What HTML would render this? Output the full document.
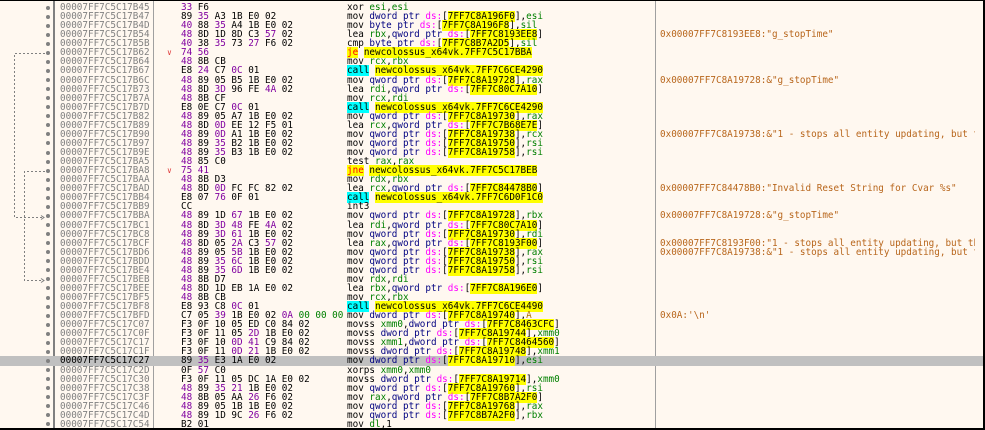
<!DOCTYPE html>
<html><head><meta charset="utf-8">
<style>
html,body{margin:0;padding:0;}
body{width:985px;height:429px;overflow:hidden;background:#fff;position:relative;font-family:"DejaVu Sans Mono","Liberation Mono",monospace;font-size:9.3px;}
#pane{position:absolute;left:0;top:0;width:983px;height:427px;background:#fff8f0;border-top:1px solid #000;border-right:2px solid #000;border-bottom:2px solid #000;overflow:hidden;}
#rows{position:absolute;left:0;top:2px;width:983px;}
.r{position:relative;height:9.07px;line-height:9.07px;white-space:pre;}
.h{background:#c0c0c0;}
.r i{position:absolute;left:46px;top:2.5px;width:4px;height:4px;border-radius:50%;background:#808080;}
.r b{position:absolute;left:60px;top:0;color:#808080;font-weight:normal;}
.h b{color:#000;}
.r s{position:absolute;left:181px;top:0;width:164px;clip-path:inset(-4px 0 -4px 0);color:#000;text-decoration:none;}
.r u{position:absolute;left:347px;top:0;width:306px;clip-path:inset(-4px 0 -4px 0);color:#000;text-decoration:none;}
.r em{position:absolute;left:660px;top:0;width:315px;clip-path:inset(-4px 0 -4px 0);color:#b8661c;font-style:normal;}
.r q{position:absolute;left:167px;top:0;color:#e04040;font-size:8px;}
.r q:before,.r q:after{content:none;}
.p{color:#8000a0}.g{color:#008000}.z{color:#000080}.d{color:#ff00ff}
.y{background:#ffff00}.j{background:#ffff00;color:#ff0000}.c{background:#00ffff}.a{color:#b07000}
.vl{position:absolute;top:0;height:427px;}
</style></head><body>
<div id="pane">
<div class="vl" style="left:53px;width:2px;background:#808080"></div>
<div class="vl" style="left:153px;width:1px;background:#a0a0a0"></div>
<div class="vl" style="left:655px;width:1px;background:#a0a0a0"></div>
<svg width="60" height="427" style="position:absolute;left:0;top:0">
<g stroke="#808080" stroke-width="1" stroke-dasharray="2,2" fill="none">
<path d="M45 52.5H14.5V216.5H44"/>
<path d="M45 170.5H24.5V279.5H44"/>
</g>
<g stroke="#808080" fill="none"><path d="M41 214.5l3 2-3 2"/><path d="M41 277.5l3 2-3 2"/></g>
</svg>
<div id="rows">
<div class="r"><i></i><b>00007FF7C5C17B45</b><s><span class="p">33</span> F6</s><u>xor <span class="g">esi</span>,<span class="g">esi</span></u></div>
<div class="r"><i></i><b>00007FF7C5C17B47</b><s>89 <span class="p">35</span> A3 1B E0 02</s><u>mov <span class="z">dword ptr</span> <span class="d">ds:</span>[<span class="y">7FF7C8A196F0</span>],<span class="g">esi</span></u></div>
<div class="r"><i></i><b>00007FF7C5C17B4D</b><s><span class="p">40</span> 88 <span class="p">35</span> A4 1B E0 02</s><u>mov <span class="z">byte ptr</span> <span class="d">ds:</span>[<span class="y">7FF7C8A196F8</span>],<span class="g">sil</span></u></div>
<div class="r"><i></i><b>00007FF7C5C17B54</b><s><span class="p">48</span> 8D 1D 8D C3 <span class="p">57</span> 02</s><u>lea <span class="g">rbx</span>,<span class="z">qword ptr</span> <span class="d">ds:</span>[<span class="y">7FF7C8193EE8</span>]</u><em>0x00007FF7C8193EE8:"g_stopTime"</em></div>
<div class="r"><i></i><b>00007FF7C5C17B5B</b><s><span class="p">40</span> 38 <span class="p">35</span> 73 <span class="p">27</span> F6 02</s><u>cmp <span class="z">byte ptr</span> <span class="d">ds:</span>[<span class="y">7FF7C8B7A2D5</span>],<span class="g">sil</span></u></div>
<div class="r"><i></i><b>00007FF7C5C17B62</b><q>&#x2228;</q><s><span class="p">74 56</span></s><u><span class="j">je</span> <span class="y">newcolossus_x64vk.7FF7C5C17BBA</span></u></div>
<div class="r"><i></i><b>00007FF7C5C17B64</b><s><span class="p">48</span> 8B CB</s><u>mov <span class="g">rcx</span>,<span class="g">rbx</span></u></div>
<div class="r"><i></i><b>00007FF7C5C17B67</b><s>E8 <span class="p">24</span> C7 <span class="p">0C</span> 01</s><u><span class="c">call</span> <span class="y">newcolossus_x64vk.7FF7C6CE4290</span></u></div>
<div class="r"><i></i><b>00007FF7C5C17B6C</b><s><span class="p">48</span> 89 05 B5 1B E0 02</s><u>mov <span class="z">qword ptr</span> <span class="d">ds:</span>[<span class="y">7FF7C8A19728</span>],<span class="g">rax</span></u><em>0x00007FF7C8A19728:&amp;"g_stopTime"</em></div>
<div class="r"><i></i><b>00007FF7C5C17B73</b><s><span class="p">48</span> 8D <span class="p">3D</span> 96 FE <span class="p">4A</span> 02</s><u>lea <span class="g">rdi</span>,<span class="z">qword ptr</span> <span class="d">ds:</span>[<span class="y">7FF7C80C7A10</span>]</u></div>
<div class="r"><i></i><b>00007FF7C5C17B7A</b><s><span class="p">48</span> 8B CF</s><u>mov <span class="g">rcx</span>,<span class="g">rdi</span></u></div>
<div class="r"><i></i><b>00007FF7C5C17B7D</b><s>E8 0E C7 <span class="p">0C</span> 01</s><u><span class="c">call</span> <span class="y">newcolossus_x64vk.7FF7C6CE4290</span></u></div>
<div class="r"><i></i><b>00007FF7C5C17B82</b><s><span class="p">48</span> 89 05 A7 1B E0 02</s><u>mov <span class="z">qword ptr</span> <span class="d">ds:</span>[<span class="y">7FF7C8A19730</span>],<span class="g">rax</span></u></div>
<div class="r"><i></i><b>00007FF7C5C17B89</b><s><span class="p">48</span> 8D <span class="p">0D</span> EE 12 F5 01</s><u>lea <span class="g">rcx</span>,<span class="z">qword ptr</span> <span class="d">ds:</span>[<span class="y">7FF7C7B68E7E</span>]</u></div>
<div class="r"><i></i><b>00007FF7C5C17B90</b><s><span class="p">48</span> 89 <span class="p">0D</span> A1 1B E0 02</s><u>mov <span class="z">qword ptr</span> <span class="d">ds:</span>[<span class="y">7FF7C8A19738</span>],<span class="g">rcx</span></u><em>0x00007FF7C8A19738:&amp;"1 - stops all entity updating, but th</em></div>
<div class="r"><i></i><b>00007FF7C5C17B97</b><s><span class="p">48</span> 89 <span class="p">35</span> B2 1B E0 02</s><u>mov <span class="z">qword ptr</span> <span class="d">ds:</span>[<span class="y">7FF7C8A19750</span>],<span class="g">rsi</span></u></div>
<div class="r"><i></i><b>00007FF7C5C17B9E</b><s><span class="p">48</span> 89 <span class="p">35</span> B3 1B E0 02</s><u>mov <span class="z">qword ptr</span> <span class="d">ds:</span>[<span class="y">7FF7C8A19758</span>],<span class="g">rsi</span></u></div>
<div class="r"><i></i><b>00007FF7C5C17BA5</b><s><span class="p">48</span> 85 C0</s><u>test <span class="g">rax</span>,<span class="g">rax</span></u></div>
<div class="r"><i></i><b>00007FF7C5C17BA8</b><q>&#x2228;</q><s><span class="p">75 41</span></s><u><span class="j">jne</span> <span class="y">newcolossus_x64vk.7FF7C5C17BEB</span></u></div>
<div class="r"><i></i><b>00007FF7C5C17BAA</b><s><span class="p">48</span> 8B D3</s><u>mov <span class="g">rdx</span>,<span class="g">rbx</span></u></div>
<div class="r"><i></i><b>00007FF7C5C17BAD</b><s><span class="p">48</span> 8D <span class="p">0D</span> FC FC 82 02</s><u>lea <span class="g">rcx</span>,<span class="z">qword ptr</span> <span class="d">ds:</span>[<span class="y">7FF7C84478B0</span>]</u><em>0x00007FF7C84478B0:"Invalid Reset String for Cvar %s"</em></div>
<div class="r"><i></i><b>00007FF7C5C17BB4</b><s>E8 07 <span class="p">76</span> 0F 01</s><u><span class="c">call</span> <span class="y">newcolossus_x64vk.7FF7C6D0F1C0</span></u></div>
<div class="r"><i></i><b>00007FF7C5C17BB9</b><s>CC</s><u>int3</u></div>
<div class="r"><i></i><b>00007FF7C5C17BBA</b><s><span class="p">48</span> 89 1D <span class="p">67</span> 1B E0 02</s><u>mov <span class="z">qword ptr</span> <span class="d">ds:</span>[<span class="y">7FF7C8A19728</span>],<span class="g">rbx</span></u><em>0x00007FF7C8A19728:&amp;"g_stopTime"</em></div>
<div class="r"><i></i><b>00007FF7C5C17BC1</b><s><span class="p">48</span> 8D <span class="p">3D 48</span> FE <span class="p">4A</span> 02</s><u>lea <span class="g">rdi</span>,<span class="z">qword ptr</span> <span class="d">ds:</span>[<span class="y">7FF7C80C7A10</span>]</u></div>
<div class="r"><i></i><b>00007FF7C5C17BC8</b><s><span class="p">48</span> 89 <span class="p">3D 61</span> 1B E0 02</s><u>mov <span class="z">qword ptr</span> <span class="d">ds:</span>[<span class="y">7FF7C8A19730</span>],<span class="g">rdi</span></u></div>
<div class="r"><i></i><b>00007FF7C5C17BCF</b><s><span class="p">48</span> 8D 05 <span class="p">2A</span> C3 <span class="p">57</span> 02</s><u>lea <span class="g">rax</span>,<span class="z">qword ptr</span> <span class="d">ds:</span>[<span class="y">7FF7C8193F00</span>]</u><em>0x00007FF7C8193F00:"1 - stops all entity updating, but th</em></div>
<div class="r"><i></i><b>00007FF7C5C17BD6</b><s><span class="p">48</span> 89 05 <span class="p">5B</span> 1B E0 02</s><u>mov <span class="z">qword ptr</span> <span class="d">ds:</span>[<span class="y">7FF7C8A19738</span>],<span class="g">rax</span></u><em>0x00007FF7C8A19738:&amp;"1 - stops all entity updating, but th</em></div>
<div class="r"><i></i><b>00007FF7C5C17BDD</b><s><span class="p">48</span> 89 <span class="p">35 6C</span> 1B E0 02</s><u>mov <span class="z">qword ptr</span> <span class="d">ds:</span>[<span class="y">7FF7C8A19750</span>],<span class="g">rsi</span></u></div>
<div class="r"><i></i><b>00007FF7C5C17BE4</b><s><span class="p">48</span> 89 <span class="p">35 6D</span> 1B E0 02</s><u>mov <span class="z">qword ptr</span> <span class="d">ds:</span>[<span class="y">7FF7C8A19758</span>],<span class="g">rsi</span></u></div>
<div class="r"><i></i><b>00007FF7C5C17BEB</b><s><span class="p">48</span> 8B D7</s><u>mov <span class="g">rdx</span>,<span class="g">rdi</span></u></div>
<div class="r"><i></i><b>00007FF7C5C17BEE</b><s><span class="p">48</span> 8D 1D EB 1A E0 02</s><u>lea <span class="g">rbx</span>,<span class="z">qword ptr</span> <span class="d">ds:</span>[<span class="y">7FF7C8A196E0</span>]</u></div>
<div class="r"><i></i><b>00007FF7C5C17BF5</b><s><span class="p">48</span> 8B CB</s><u>mov <span class="g">rcx</span>,<span class="g">rbx</span></u></div>
<div class="r"><i></i><b>00007FF7C5C17BF8</b><s>E8 93 C8 <span class="p">0C</span> 01</s><u><span class="c">call</span> <span class="y">newcolossus_x64vk.7FF7C6CE4490</span></u></div>
<div class="r"><i></i><b>00007FF7C5C17BFD</b><s>C7 05 <span class="p">39</span> 1B E0 02 <span class="p">0A</span> <span class="g">00 00 00</span></s><u>mov <span class="z">dword ptr</span> <span class="d">ds:</span>[<span class="y">7FF7C8A19740</span>],<span class="a">A</span></u><em>0x0A:'\n'</em></div>
<div class="r"><i></i><b>00007FF7C5C17C07</b><s>F3 0F 10 05 ED C0 84 02</s><u>movss <span class="g">xmm0</span>,<span class="z">dword ptr</span> <span class="d">ds:</span>[<span class="y">7FF7C8463CFC</span>]</u></div>
<div class="r"><i></i><b>00007FF7C5C17C0F</b><s>F3 0F 11 05 <span class="p">2D</span> 1B E0 02</s><u>movss <span class="z">dword ptr</span> <span class="d">ds:</span>[<span class="y">7FF7C8A19744</span>],<span class="g">xmm0</span></u></div>
<div class="r"><i></i><b>00007FF7C5C17C17</b><s>F3 0F 10 <span class="p">0D 41</span> C9 84 02</s><u>movss <span class="g">xmm1</span>,<span class="z">dword ptr</span> <span class="d">ds:</span>[<span class="y">7FF7C8464560</span>]</u></div>
<div class="r"><i></i><b>00007FF7C5C17C1F</b><s>F3 0F 11 <span class="p">0D 21</span> 1B E0 02</s><u>movss <span class="z">dword ptr</span> <span class="d">ds:</span>[<span class="y">7FF7C8A19748</span>],<span class="g">xmm1</span></u></div>
<div class="r h"><i></i><b>00007FF7C5C17C27</b><s>89 <span class="p">35</span> E3 1A E0 02</s><u>mov <span class="z">dword ptr</span> <span class="d">ds:</span>[<span class="y">7FF7C8A19710</span>],<span class="g">esi</span></u></div>
<div class="r"><i></i><b>00007FF7C5C17C2D</b><s>0F <span class="p">57</span> C0</s><u>xorps <span class="g">xmm0</span>,<span class="g">xmm0</span></u></div>
<div class="r"><i></i><b>00007FF7C5C17C30</b><s>F3 0F 11 05 DC 1A E0 02</s><u>movss <span class="z">dword ptr</span> <span class="d">ds:</span>[<span class="y">7FF7C8A19714</span>],<span class="g">xmm0</span></u></div>
<div class="r"><i></i><b>00007FF7C5C17C38</b><s><span class="p">48</span> 89 <span class="p">35 21</span> 1B E0 02</s><u>mov <span class="z">qword ptr</span> <span class="d">ds:</span>[<span class="y">7FF7C8A19760</span>],<span class="g">rsi</span></u></div>
<div class="r"><i></i><b>00007FF7C5C17C3F</b><s><span class="p">48</span> 8B 05 AA <span class="p">26</span> F6 02</s><u>mov <span class="g">rax</span>,<span class="z">qword ptr</span> <span class="d">ds:</span>[<span class="y">7FF7C8B7A2F0</span>]</u></div>
<div class="r"><i></i><b>00007FF7C5C17C46</b><s><span class="p">48</span> 89 05 1B 1B E0 02</s><u>mov <span class="z">qword ptr</span> <span class="d">ds:</span>[<span class="y">7FF7C8A19768</span>],<span class="g">rax</span></u></div>
<div class="r"><i></i><b>00007FF7C5C17C4D</b><s><span class="p">48</span> 89 1D 9C <span class="p">26</span> F6 02</s><u>mov <span class="z">qword ptr</span> <span class="d">ds:</span>[<span class="y">7FF7C8B7A2F0</span>],<span class="g">rbx</span></u></div>
<div class="r"><i></i><b>00007FF7C5C17C54</b><s>B2 01</s><u>mov <span class="g">dl</span>,1</u></div>
</div>
</div>
</body></html>
